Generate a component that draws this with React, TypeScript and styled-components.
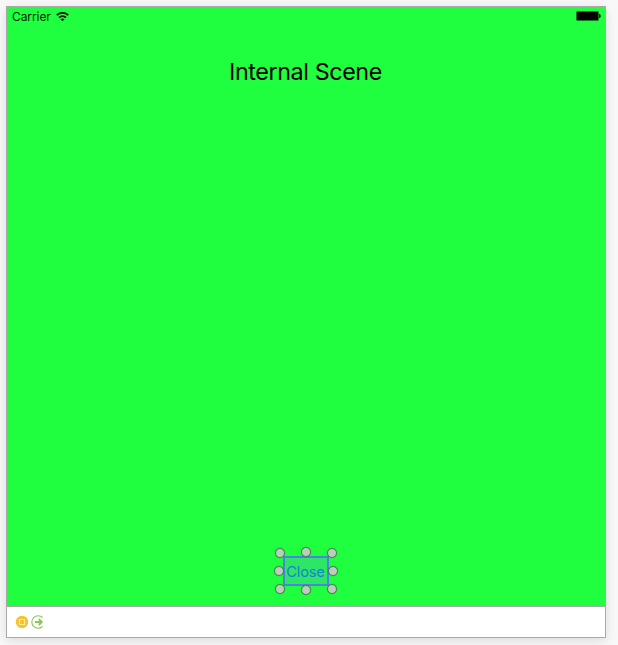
import React from "react";
import styled, { createGlobalStyle } from "styled-components";

const GlobalStyle = createGlobalStyle`
  * { box-sizing: border-box; }
  body { margin: 0; background: #f8f8f8; font-family: Inter, "Liberation Sans", sans-serif; }
`;

const Page = styled.div`
  width: 618px;
  height: 645px;
  padding: 6px;
  overflow: hidden;
`;

const SceneFrame = styled.section`
  width: 600px;
  height: 632px;
  border: 1px solid #a9a9a9;
  background: #fff;
  box-shadow: 0 3px 10px rgba(0, 0, 0, 0.11);
  display: flex;
  flex-direction: column;
`;

const Canvas = styled.div`
  height: 599px;
  background: #1fff3f;
  display: flex;
  flex-direction: column;
  align-items: center;
`;

const StatusBar = styled.div`
  width: 100%;
  height: 20px;
  padding: 0 4px 0 5px;
  display: flex;
  align-items: center;
`;

const Carrier = styled.span`
  font-size: 12px;
  line-height: 20px;
  letter-spacing: -0.08px;
  color: #011a04;
  margin-right: 5px;
`;

const BatterySlot = styled.div`
  margin-left: auto;
  height: 12px;
  display: flex;
`;

const Title = styled.h1`
  margin: 28px 1px 0 0;
  font-size: 23.3px;
  line-height: 34px;
  font-weight: 400;
  letter-spacing: -0.4px;
  color: #000;
  white-space: nowrap;
`;

const CloseButton = styled.button`
  position: relative;
  width: 46px;
  height: 30px;
  margin: auto 0 20px;
  padding: 1px 1px 0 0;
  border: 2px solid #4a86e0;
  background: #2ee665;
  color: #1283d8;
  font-family: inherit;
  font-size: 14.7px;
  line-height: 26px;
  letter-spacing: -0.2px;
  display: flex;
  justify-content: center;
`;

const Handle = styled.i<{ $x: number; $y: number }>`
  position: absolute;
  left: ${(p) => p.$x - 7}px;
  top: ${(p) => p.$y - 7}px;
  width: 10px;
  height: 10px;
  border: 1px solid #58775c;
  border-radius: 50%;
  background: #b9cfbc;
  box-shadow: 0 0 1px rgba(0, 60, 10, 0.45);
`;

const Dock = styled.div`
  flex: 1;
  border-top: 1px solid #a9a9a9;
  padding: 0 0 0 8px;
  display: flex;
  align-items: center;
  gap: 2px;
`;

const handles = [
  [-3, -3], [23, -4], [49, -3],
  [-4, 15], [50, 15],
  [-3, 33], [23, 34], [49, 33],
];

const WifiIcon = () => (
  <svg width="13" height="10" viewBox="0 0 13 10" fill="none" stroke="#011a04" strokeWidth="1.8">
    <path d="M0.8 3.2C4-.1 9-.1 12.2 3.2" />
    <path d="M3 5.6C5 3.7 8 3.7 10 5.6" />
    <path d="M4.5 7.2C5.6 6.2 7.4 6.2 8.5 7.2L6.5 9.2Z" fill="#011a04" stroke="none" />
  </svg>
);

const BatteryIcon = () => (
  <svg width="25" height="10" viewBox="0 0 25 10">
    <rect x="0.5" y="0.5" width="22" height="9" rx="1" fill="#000" stroke="#0c7a1c" />
    <path d="M23 2.8Q24.8 3.2 24.8 5T23 7.2Z" fill="#022606" />
  </svg>
);

const ControllerIcon = () => (
  <svg width="14" height="14" viewBox="0 0 14 14">
    <circle cx="7" cy="7" r="6.2" fill="#f5c431" />
    <rect x="4.5" y="4.5" width="5" height="5" fill="none" stroke="#fdeca8" />
  </svg>
);

const ExitIcon = () => (
  <svg width="14" height="14" viewBox="0 0 14 14" fill="none" stroke="#8cc751">
    <path d="M11.5 2.5A6.3 6.3 0 1 0 11.5 11.5" strokeWidth="1.1" />
    <path d="M4 7H11" strokeWidth="2" />
    <path d="M7.8 4L10.8 7L7.8 10" strokeWidth="1.8" />
  </svg>
);

export default function App() {
  return (
    <Page>
      <GlobalStyle />
      <SceneFrame>
        <Canvas>
          <StatusBar>
            <Carrier>Carrier</Carrier>
            <WifiIcon />
            <BatterySlot><BatteryIcon /></BatterySlot>
          </StatusBar>
          <Title>Internal Scene</Title>
          <CloseButton>
            Close
            {handles.map(([x, y]) => <Handle key={`${x},${y}`} $x={x} $y={y} />)}
          </CloseButton>
        </Canvas>
        <Dock>
          <ControllerIcon />
          <ExitIcon />
        </Dock>
      </SceneFrame>
    </Page>
  );
}
